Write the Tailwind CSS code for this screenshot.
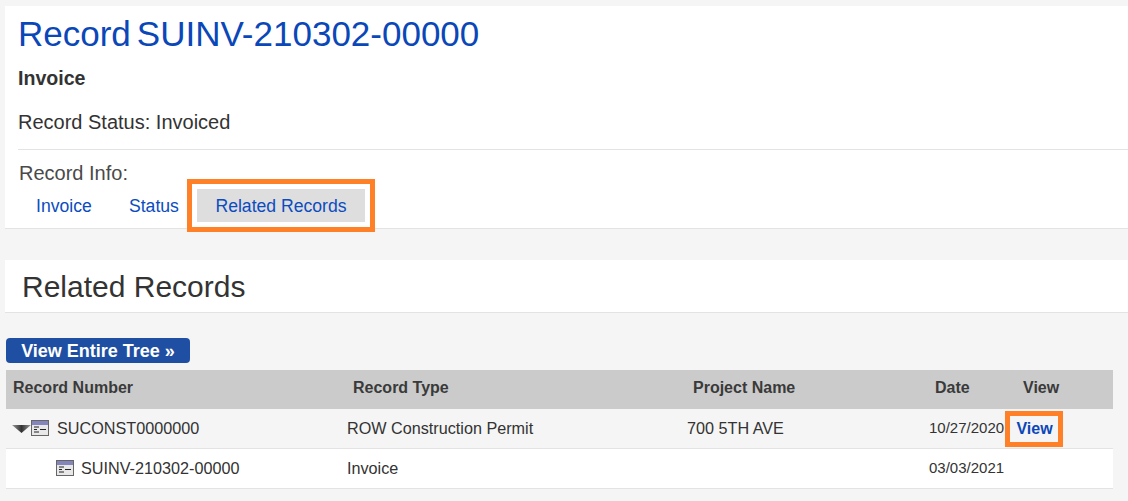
<!DOCTYPE html>
<html lang="en">
<head>
    <meta charset="UTF-8">
    <title>Record SUINV-210302-00000</title>
    <script src="https://cdn.jsdelivr.net/npm/@tailwindcss/browser@4"></script>
</head>
<body class="bg-[#f5f5f5] font-['Liberation_Sans',Arial,sans-serif] text-[#333] h-[501px] w-[1128px] overflow-hidden">
    <div class="pl-[5px] pt-[6px]">
        <!-- record header -->
        <section class="bg-white h-[223px] border-b border-[#e3e3e3] pl-[13px] flex flex-col">
            <h1 class="text-[35px] leading-[40px] mt-[8px] text-[#0a47b8]"><span class="mr-[6px]">Record</span>SUINV-210302-00000</h1>
            <p class="text-[19.6px] leading-[22px] font-bold mt-[13px]">Invoice</p>
            <p class="text-[20px] leading-[24px] mt-[21px]">Record Status: Invoiced</p>
            <div class="border-t border-[#e3e3e3] mt-[15px] pt-[12px]">
                <p class="text-[20px] leading-[23px] text-[#4a4a4a] pl-[1px]">Record Info:</p>
                <nav class="flex items-center text-[17.6px] leading-[20px] text-[#0b4cc0] mt-[-6px]">
                    <a class="ml-[18px] w-[93px]">Invoice</a>
                    <a class="w-[58px]">Status</a>
                    <span class="border-[5px] border-[#ff8026] p-[5px] w-[188px] h-[53px]">
                        <a class="bg-[#dedede] h-[33px] flex items-center justify-center">Related Records</a>
                    </span>
                </nav>
            </div>
        </section>

        <!-- related records -->
        <section class="bg-white h-[53px] mt-[31px] border-b border-[#e3e3e3] pl-[17px]">
            <h2 class="text-[30px] leading-[54px] text-[#333]">Related Records</h2>
        </section>

        <div class="pl-[1px] w-[1108px]">
            <a class="mt-[25px] pt-[2px] flex items-center justify-center w-[184px] h-[25px] bg-[#1f4fa3] rounded-[4px] text-white font-bold text-[18px]">View Entire Tree »</a>

            <div class="mt-[7px] text-[16.200px]">
                <div class="flex items-center h-[39px] pb-[4px] bg-[#cbcbcb] font-bold text-[16px] text-[#3a3a3a]">
                    <span class="w-[347px] pl-[7px]">Record Number</span>
                    <span class="w-[340px]">Record Type</span>
                    <span class="w-[242px]">Project Name</span>
                    <span class="w-[88px]">Date</span>
                    <span>View</span>
                </div>
                <div class="flex items-center h-[40px] border-b border-[#e3e3e3]">
                    <span class="w-[341px] pl-[6px] flex items-center">
                        <svg class="mt-[1px]" width="19" height="8" viewBox="0 0 19 8"><defs><linearGradient id="arrow" x1="0" x2="1" y1="0" y2="0"><stop offset="0" stop-color="#999"/><stop offset=".5" stop-color="#333"/><stop offset="1" stop-color="#999"/></linearGradient></defs><path d="M0 0h19L9.500 8z" fill="url(#arrow)"/></svg>
                        <svg width="18" height="16" viewBox="0 0 18 16"><rect x=".5" y=".5" width="17" height="15" fill="#e8e8e8" stroke="#666"/><rect x="1" y="1" width="16" height="4" fill="#8486bb"/><path d="M3 7h5M3 9.500h3M3 12h5M9 9.500h6" stroke="#222"/></svg>
                        <span class="ml-[8px]">SUCONST0000000</span>
                    </span>
                    <span class="w-[340px]">ROW Construction Permit</span>
                    <span class="w-[242px]">700 5TH AVE</span>
                    <span class="w-[76px] text-[15px]">10/27/2020</span>
                    <a class="border-[5px] border-[#ff8026] w-[58px] h-[36px] pl-[1px] flex items-center justify-center font-bold text-[16px] text-[#0b47b8]">View</a>
                </div>
                <div class="flex items-center h-[40px] border-b border-[#e3e3e3] bg-white">
                    <span class="w-[341px] pl-[50px] flex items-center">
                        <svg width="18" height="16" viewBox="0 0 18 16"><rect x=".5" y=".5" width="17" height="15" fill="#e8e8e8" stroke="#666"/><rect x="1" y="1" width="16" height="4" fill="#8486bb"/><path d="M3 7h5M3 9.500h3M3 12h5M9 9.500h6" stroke="#222"/></svg>
                        <span class="ml-[7px]">SUINV-210302-00000</span>
                    </span>
                    <span class="w-[582px]">Invoice</span>
                    <span class="text-[15px]">03/03/2021</span>
                </div>
            </div>
        </div>
    </div>
</body>
</html>
